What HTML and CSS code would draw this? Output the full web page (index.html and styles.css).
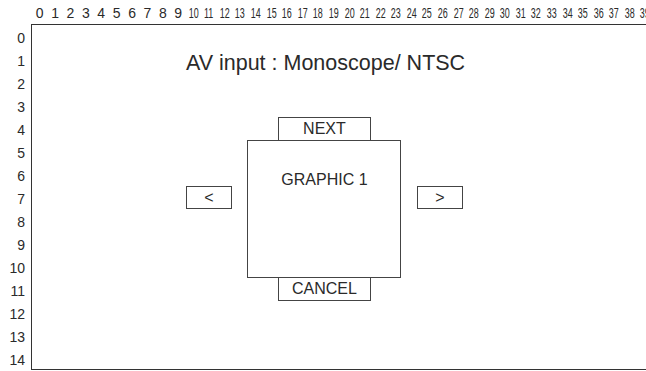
FILE: index.html
```html
<!DOCTYPE html>
<html lang="en">
<head>
    <meta charset="UTF-8">
    <meta name="viewport" content="width=device-width, initial-scale=1.0">
    <title>AV input</title>
    <link rel="stylesheet" href="styles.css">
</head>
<body>

<div class="sheet">
    <div class="corner"></div>

    <div class="col-labels">
        <span>0</span><span>1</span><span>2</span><span>3</span><span>4</span>
        <span>5</span><span>6</span><span>7</span><span>8</span><span>9</span>
        <span class="narrow">10</span><span class="narrow">11</span><span class="narrow">12</span><span class="narrow">13</span><span class="narrow">14</span>
        <span class="narrow">15</span><span class="narrow">16</span><span class="narrow">17</span><span class="narrow">18</span><span class="narrow">19</span>
        <span class="narrow">20</span><span class="narrow">21</span><span class="narrow">22</span><span class="narrow">23</span><span class="narrow">24</span>
        <span class="narrow">25</span><span class="narrow">26</span><span class="narrow">27</span><span class="narrow">28</span><span class="narrow">29</span>
        <span class="narrow">30</span><span class="narrow">31</span><span class="narrow">32</span><span class="narrow">33</span><span class="narrow">34</span>
        <span class="narrow">35</span><span class="narrow">36</span><span class="narrow">37</span><span class="narrow">38</span><span class="narrow">39</span>
    </div>

    <div class="row-labels">
        <span>0</span><span>1</span><span>2</span><span>3</span><span>4</span>
        <span>5</span><span>6</span><span>7</span><span>8</span><span>9</span>
        <span>10</span><span>11</span><span>12</span><span>13</span><span>14</span>
    </div>

    <!-- screen grid: 40 columns x 15 rows -->
    <div class="frame">
        <div class="title">AV input : Monoscope/ NTSC</div>
        <div class="btn btn-next">NEXT</div>
        <div class="btn btn-prev">&lt;</div>
        <div class="graphic">GRAPHIC 1</div>
        <div class="btn btn-fwd">&gt;</div>
        <div class="btn btn-cancel">CANCEL</div>
    </div>
</div>

</body>
</html>
```

FILE: styles.css
```css
html, body {
    margin: 0;
    padding: 0;
    background-color: white;
    overflow: hidden;
}
body {
    font-family: "Liberation Sans", Arial, sans-serif;
    color: #2a2a2a;
}
.sheet {
    display: grid;
    grid-template-columns: 31px 620px;
    grid-template-rows: 24px 346px;
    width: 651px;
}
.col-labels {
    display: flex;
    padding-left: 1px;
    align-items: flex-end;
    padding-bottom: 4px;
    box-sizing: border-box;
}
.col-labels span {
    flex: 0 0 15.4px;
    text-align: center;
    font-size: 14px;
    line-height: 1;
}
.col-labels span.narrow {
    transform: scaleX(0.64);
}
.row-labels {
    display: flex;
    flex-direction: column;
    padding-top: 1px;
}
.row-labels span {
    flex: 0 0 23px;
    display: flex;
    align-items: center;
    justify-content: flex-end;
    padding-right: 6px;
    padding-top: 2px;
    box-sizing: border-box;
    font-size: 14px;
}
.frame {
    border-left: 1px solid #333;
    border-top: 1px solid #333;
    border-bottom: 1px solid #333;
    display: grid;
    grid-template-columns: repeat(40, 15.4px);
    grid-template-rows: repeat(15, 23px);
}
.title {
    grid-column: 11 / 29;
    grid-row: 2 / 3;
    text-align: center;
    white-space: nowrap;
    font-size: 21.5px;
    align-self: end;
    line-height: 1;
    margin-bottom: -3px;
}
.btn {
    border: 1px solid #444;
    background-color: white;
    font-size: 16px;
    display: flex;
    align-items: center;
    justify-content: center;
}
.btn-next {
    grid-column: 17 / 23;
    grid-row: 5 / 6;
    margin-bottom: -1px;
    z-index: 1;
}
.btn-cancel {
    grid-column: 17 / 23;
    grid-row: 12 / 13;
    margin-top: -1px;
    z-index: 1;
}
.btn-prev {
    grid-column: 11 / 14;
    grid-row: 8 / 9;
}
.btn-fwd {
    grid-column: 26 / 29;
    grid-row: 8 / 9;
}
.graphic {
    grid-column: 15 / 25;
    grid-row: 6 / 12;
    border: 1px solid #444;
    text-align: center;
    font-size: 16px;
    padding-top: 30px;
}
```
